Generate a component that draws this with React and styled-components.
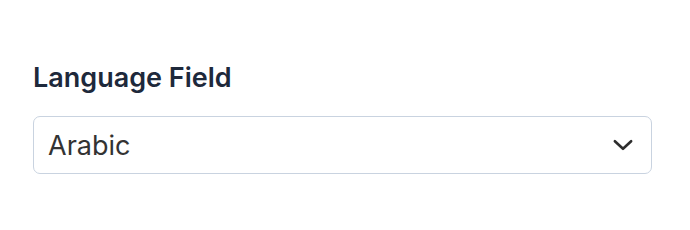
import React, { useState } from "react";
import styled, { createGlobalStyle } from "styled-components";

const Global = createGlobalStyle`
  body {
    margin: 0;
    background: #ffffff;
    font-family: Inter, "Noto Sans", sans-serif;
  }
`;

const Page = styled.div`
  padding: 62px 38px 0 33px;
`;

const Field = styled.div`
  display: flex;
  flex-direction: column;
  gap: 22px;
`;

const Label = styled.label`
  font-size: 27px;
  font-weight: 600;
  color: #1e293b;
  line-height: 32px;
`;

const SelectBox = styled.div`
  height: 58px;
  box-sizing: border-box;
  border: 1.5px solid #c9d3e0;
  border-radius: 7px;
  display: flex;
  align-items: center;
  justify-content: space-between;
  padding: 0 15px 0 14px;
  font-size: 27px;
  color: #333333;
`;

const Chevron = () => (
  <svg width="26" height="26" viewBox="0 0 24 24" fill="none">
    <path
      d="M4.5 8.5l7.5 7 7.5-7"
      stroke="#2d2d2d"
      strokeWidth="2.4"
      strokeLinecap="round"
      strokeLinejoin="round"
    />
  </svg>
);

export default function App() {
  const [value] = useState("Arabic");
  return (
    <Page>
      <Global />
      <Field>
        <Label>Language Field</Label>
        <SelectBox>
          <span>{value}</span>
          <Chevron />
        </SelectBox>
      </Field>
    </Page>
  );
}
